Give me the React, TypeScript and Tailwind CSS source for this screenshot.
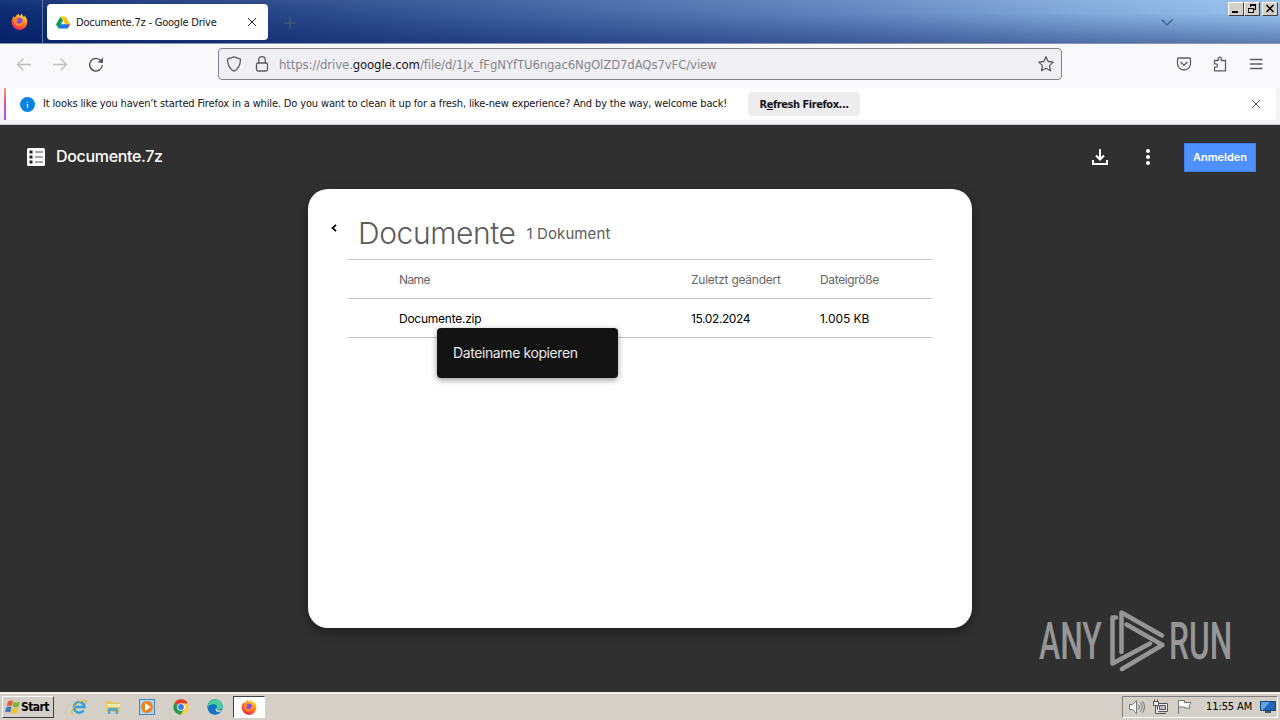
import { ReactNode } from 'react';
import { Info } from 'lucide-react';

const tahoma = "font-['DejaVu_Sans_Condensed','DejaVu_Sans',sans-serif]";
const roboto = "font-['Inter','Open_Sans',sans-serif]";

const FirefoxLogo = ({ size = 17 }: { size?: number }) => (
  <svg width={size} height={size} viewBox="0 0 18 18">
    <defs>
      <linearGradient id="fox" x1="0.8" y1="0" x2="0.3" y2="1">
        <stop offset="0" stopColor="#fff04a" />
        <stop offset="0.4" stopColor="#ff9420" />
        <stop offset="0.75" stopColor="#ff4b3c" />
        <stop offset="1" stopColor="#e91c69" />
      </linearGradient>
    </defs>
    <path fill="url(#fox)" d="M11.4 0.4c.3 1.9 1.6 2.7 2.7 4 .1-.8-.1-1.3-.3-1.8 2.5 1.6 3.6 4.3 3.5 7A8.3 8.3 0 0 1 .7 9.7C.6 7 1.5 5 3 3.3l.6 1.5 1-.5C5.4 2 7 1.2 8.6.7 8 1.6 8.5 2.5 9.2 2.9c.8-.5 1.6-1.1 2.2-2.5z" />
    <circle cx="9" cy="8.4" r="3.3" fill="#8b46e8" />
    <path fill="#ff8a25" d="M3.3 6c2-.6 3.7.1 4.9 1.4-1.9 0-2 1-2.4 1.6.4 2 1.8 2.6 3.5 2.2 1.7-.3 2.3-1.7 2.1-3.2 1.5 1.5 1.5 4-.5 5.5-2.5 1.5-5.8.5-6.9-2.2C3.2 9.5 2.9 7.3 3.3 6z" />
  </svg>
);

const DriveLogo = () => (
  <svg width="14" height="13" viewBox="0 0 14 13">
    <path fill="#0b9d58" d="M4.7.4 7 4.5 2.3 12.3 0 8.3z" />
    <path fill="#ffc107" d="M4.7.4h4.6L14 8.3H9.4z" />
    <path fill="#1a73e8" d="M4.6 8.3H14l-2.3 4.2H2.3z" />
    <path fill="#ea4335" d="M11.6 8.3H14l-1.4 2.6z" />
  </svg>
);

interface StrokeIconProps {
  size?: number;
  className?: string;
  children: ReactNode;
}

function StrokeIcon({ size = 16, className = 'text-[#5b5b66]', children }: StrokeIconProps) {
  return (
    <svg
      width={size}
      height={size}
      viewBox="0 0 16 16"
      fill="none"
      stroke="currentColor"
      strokeWidth="1.3"
      strokeLinecap="round"
      strokeLinejoin="round"
      className={className}
    >
      {children}
    </svg>
  );
}

function WindowButton({ children, className = '' }: { children: ReactNode; className?: string }) {
  return (
    <div
      className={`h-[14px] w-4 border border-t-white border-l-white border-r-[#404040] border-b-[#404040] bg-[#d4d0c8] ${className}`}
    >
      <svg width="14" height="12" viewBox="0 0 14 12" fill="none" stroke="#000" shapeRendering="crispEdges">
        {children}
      </svg>
    </div>
  );
}

function TabBar() {
  return (
    <div className="flex h-[43px] shrink-0 bg-[linear-gradient(to_bottom,rgba(255,255,255,0.06),rgba(0,0,0,0)_30%,rgba(0,20,90,0.4)),linear-gradient(to_right,#0a2a72,#274688_22%,#4467a4_45%,#6588c2_68%,#83abdb_85%,#98c2ee)]">
      <div className="flex h-full w-[43px] items-center justify-center border-r border-[#5f73a6] pr-1">
        <FirefoxLogo />
      </div>
      <div className="mt-1 ml-1 flex h-9 w-[221px] items-center rounded bg-white pr-2.5 pl-[9px]">
        <DriveLogo />
        <span className={`${tahoma} ml-1.5 flex-1 pt-0.5 text-[11px] tracking-[-0.21px] whitespace-nowrap text-[#15141a]`}>
          Documente.7z - Google Drive
        </span>
        <StrokeIcon size={12} className="text-[#15141a]">
          <path d="m3 3 10 10M13 3 3 13" />
        </StrokeIcon>
      </div>
      <div className="flex w-[43px] items-center justify-center pt-0.5">
        <StrokeIcon size={14} className="text-[#4e5f72]">
          <path d="M8 1.5v13M1.5 8h13" />
        </StrokeIcon>
      </div>
      <div className="ml-auto flex items-center pr-[53px]">
        <StrokeIcon size={16} className="text-[#47658e]">
          <path d="m3 6 5 5 5-5" strokeWidth="1.5" />
        </StrokeIcon>
      </div>
      <div className="mt-0.5 mr-[2px] flex">
        <WindowButton>
          <path d="M3 9h6" strokeWidth="2" />
        </WindowButton>
        <WindowButton>
          <path d="M5.5 4V1.5h5v5H9M5 2h6M3.5 5.5h5v4h-5zM3 5h6" />
        </WindowButton>
        <WindowButton className="ml-[2px]">
          <path d="m3.5 2 7 7m0-7-7 7" strokeWidth="1.5" shapeRendering="auto" />
        </WindowButton>
      </div>
    </div>
  );
}

function Toolbar() {
  return (
    <div className="flex h-[45px] shrink-0 items-center border-t border-[#8a93a8] bg-[#f9f9fb] pb-1 pr-4 pl-4">
      <StrokeIcon className="text-[#bdbdc2]">
        <path d="M1.5 8.5h13M7 3 1.5 8.5 7 14" />
      </StrokeIcon>
      <StrokeIcon className="ml-5 text-[#bdbdc2]">
        <path d="M14.5 8.5h-13M9 3l5.5 5.5L9 14" />
      </StrokeIcon>
      <StrokeIcon className="ml-5 text-[#4b4b55]">
        <path d="M14.2 9.5A6.3 6.3 0 1 1 12.8 4.7l1.5 1.5" />
        <path d="M14.5 2.5v3.7h-3.7z" fill="currentColor" strokeWidth="0.8" />
      </StrokeIcon>
      <div className="ml-[114px] flex h-8 w-[844px] items-center rounded border border-[#82828b] bg-[#f0f0f4] pr-[7px] pl-[7px]">
        <StrokeIcon>
          <path d="M8 .8 14.5 3.2c0 5-1.8 9.3-6.5 12C3.3 12.5 1.5 8.2 1.5 3.2z" />
        </StrokeIcon>
        <StrokeIcon className="ml-3 text-[#5b5b66]">
          <rect x="2.5" y="7" width="11" height="8" rx="1.5" />
          <path d="M4.7 7V4a3.3 3.3 0 0 1 6.6 0v3" />
        </StrokeIcon>
        <span className={`${tahoma} ml-[9px] flex-1 pt-0.5 text-[13px] tracking-[-0.11px] whitespace-nowrap text-[#85858d]`}>
          https://drive.<span className="text-[#15141a]">google.com</span>
          /file/d/1Jx_fFgNYfTU6ngac6NgOlZD7dAQs7vFC/view
        </span>
        <StrokeIcon>
          <path d="m8 .8 2.2 4.7 5 .6-3.7 3.5 1 5.2L8 12.3l-4.500 2.500 1-5.200L.8 6.100l5-.6z" />
        </StrokeIcon>
      </div>
      <div className="ml-auto flex gap-5">
        <StrokeIcon>
          <path d="M2.5 2h11c.6 0 1 .4 1 1v4.5a6.5 6.5 0 0 1-13 0V3c0-.6.4-1 1-1zM4.8 6.3 8 9.3l3.2-3" />
        </StrokeIcon>
        <StrokeIcon>
          <path d="M2.5 4.5h3.7V2.7a1.5 1.5 0 0 1 3 0v1.8h4.3v10.3H2.5v-3.6h1.3a1.6 1.6 0 0 0 0-3.3H2.5z" />
        </StrokeIcon>
        <StrokeIcon>
          <path d="M2.5 3.5h11.5M2.5 8h11.5M2.5 12.5h11.5" />
        </StrokeIcon>
      </div>
    </div>
  );
}

function Notification() {
  return (
    <div className="h-[37px] shrink-0 border-b border-[#c8c8cc] bg-[#f4f4f6] pr-1 pb-1 pl-1">
      <div className="flex h-8 items-center rounded bg-white pr-[14px]">
        <div className="h-full w-[2px] bg-linear-to-b from-[#ff9a62] via-[#e5499a] to-[#9059ff]" />
        <div className="ml-[14px] flex size-[15px] items-center justify-center rounded-full bg-[#0a84e0]">
          <Info className="size-[15px] text-white [&>circle]:hidden" strokeWidth={2} />
        </div>
        <span className={`${tahoma} ml-2 w-[705px] text-[11px] tracking-[-0.148px] whitespace-nowrap text-[#15141a]`}>
          It looks like you haven’t started Firefox in a while. Do you want to clean it up for a fresh, like-new
          experience? And by the way, welcome back!
        </span>
        <button
          className={`${tahoma} h-6 w-28 rounded bg-[#ededf0] pt-0.5 text-[11px] font-bold tracking-[-0.45px] whitespace-nowrap text-[#15141a]`}
        >
          R<u>e</u>fresh Firefox...
        </button>
        <StrokeIcon size={12} className="ml-auto text-[#5b5b66]">
          <path d="m3 3 10 10M13 3 3 13" />
        </StrokeIcon>
      </div>
    </div>
  );
}

function ViewerHeader() {
  return (
    <div className="flex h-16 items-center pr-6 pl-[27px] text-white">
      <svg width="18" height="18" viewBox="0 0 18 18">
        <rect width="18" height="18" rx="1.5" fill="#fff" />
        <path d="M2.5 2.5h3v3h-3zM2.5 7.500h3v3h-3zM2.500 12.500h3v3h-3z" fill="#222" />
        <path d="M8 4h8M8 9h8M8 14h8" stroke="#888" strokeWidth="1.5" />
      </svg>
      <span className={`${roboto} ml-[11px] pb-0.5 text-[16px] font-medium tracking-[-0.33px] whitespace-nowrap`}>
        Documente.7z
      </span>
      <svg className="ml-auto" width="16" height="16" viewBox="0 0 16 16" fill="none" stroke="#fff" strokeWidth="2">
        <path d="M8 0v10M4 6.5l4 4 4-4M1 11v4h14v-4" />
      </svg>
      <svg className="ml-[38px]" width="4" height="16" viewBox="0 0 4 16" fill="#fff">
        <circle cx="2" cy="2" r="2" />
        <circle cx="2" cy="8" r="2" />
        <circle cx="2" cy="14" r="2" />
      </svg>
      <button
        className={`${roboto} ml-[34px] h-[29px] w-[72px] border border-[#3f7fee] bg-[#4d90fe] text-[11px] font-semibold whitespace-nowrap`}
      >
        Anmelden
      </button>
    </div>
  );
}

function ArchiveCard() {
  const row =
    'grid h-[39px] grid-cols-[292px_129px_1fr] items-center border-b border-[#c6c6c6] pt-0.5 pl-[51px] text-[12px] tracking-[-0.25px] whitespace-nowrap';
  return (
    <div className={`${roboto} relative mx-auto h-[439px] w-[664px] rounded-[20px] bg-white pr-10 pl-10 shadow-[0_4px_12px_rgba(0,0,0,0.4)]`}>
      <svg className="absolute top-[34px] left-[22px]" width="8" height="10" viewBox="0 0 8 10">
        <path d="M6 1.8 2.5 5 6 8.2" fill="none" stroke="#000" strokeWidth="1.8" />
      </svg>
      <div className="flex h-[71px] items-center border-b border-[#c6c6c6] pt-[18px] pl-2.5 whitespace-nowrap text-[#5c5c5c]">
        <h1 className="text-[30px] font-light tracking-[-0.4px]">Documente</h1>
        <span className="ml-[11px] pt-0.5 text-[15px] tracking-[0.1px]">1 Dokument</span>
      </div>
      <div className={`${row} text-[#666]`}>
        <span className="tracking-[-0.6px]">Name</span>
        <span>Zuletzt geändert</span>
        <span className="tracking-[-0.35px]">Dateigröße</span>
      </div>
      <div className={`${row} text-black`}>
        <span>Documente.zip</span>
        <span className="tracking-[-0.4px]">15.02.2024</span>
        <span className="tracking-[-0.05px]">1.005 KB</span>
      </div>
      <div className="absolute top-[139px] left-[129px] flex h-[50px] w-[181px] items-center rounded bg-[#131313] pb-0.5 pl-4 text-[14px] tracking-[-0.4px] whitespace-nowrap text-[#e8e8e8] shadow-[0_2px_6px_rgba(0,0,0,0.4)]">
        Dateiname kopieren
      </div>
    </div>
  );
}

const Watermark = () => (
  <svg
    className="absolute right-[34px] bottom-[9px] overflow-visible"
    width="210"
    height="86"
    viewBox="1036 597 210 86"
    fill="#969696"
    fontFamily="Roboto, sans-serif"
    fontSize="51"
    fontWeight="500"
  >
    <text transform="translate(1039 659) scale(0.625 1)">ANY</text>
    <text transform="translate(1169 659) scale(0.622 1)">RUN</text>
    <g fill="none" stroke="#969696" strokeWidth="4.5" strokeLinecap="round" strokeLinejoin="round">
      <path d="M1121.5 652V612.5L1162 635.5" />
      <path d="M1126.5 624.5 1162.5 645 1122 669" />
      <path d="M1116 617.5h-3.5v46L1150 643.5" />
    </g>
  </svg>
);

function Taskbar() {
  return (
    <div className={`${tahoma} flex h-7 shrink-0 items-center border-t-2 border-[#f3f1ed] bg-[#d4d0c8] pr-0.5 pl-0.5 text-[11px] text-black`}>
      <div className="flex h-[22px] w-[52px] items-center border border-t-white border-l-white border-r-[#404040] border-b-[#404040] pl-0.5 text-[12px] font-bold tracking-[-0.6px]">
        <svg width="16" height="16" viewBox="0 0 16 16">
          <path fill="#e35b2f" d="M3 2.5c2-1.5 3.5-1.2 5-.3L6.7 7.3C5 6.3 3.5 6.5 1.7 7.3z" />
          <path fill="#7eb53e" d="M8.8 2.7c2 1.2 3.5 1 6.2-.3l-1.3 5c-2 1.2-4 1.3-6.2.3z" />
          <path fill="#3c78c8" d="M1.4 8.2c2-1 3.5-.8 5.1.1L5.2 13.4C3.5 12.3 2 12.5 0 13.3z" />
          <path fill="#f5c12c" d="M7.3 8.7c2 1.1 4 1 6.2-.2L12.2 13.5c-2 1.3-4 1.5-6.2.3z" />
        </svg>
        Start
      </div>
      <div className="ml-[17px] flex items-center gap-[18px]">
        <svg width="16" height="16" viewBox="0 0 16 16" fill="none">
          <path d="M12.5 11.5A5.3 5.3 0 1 1 13.5 8H4" stroke="#2e9fe0" strokeWidth="2.5" />
          <path d="M1.5 15C-1 12 5 4 11 2c3-1 5-.5 3.5 2" stroke="#e6b52f" strokeWidth="1.3" />
        </svg>
        <svg width="16" height="16" viewBox="0 0 16 16">
          <path fill="#e4c75c" d="M1 2h5l1 1.5h8V13H1z" />
          <path fill="#f7e9a6" d="M2 5h13v3H2z" />
          <path fill="#5ba5d2" d="M3 9h10v6h-2.5v-3h-5v3H3z" />
        </svg>
        <svg width="16" height="16" viewBox="0 0 16 16">
          <rect x="0.5" y="0.5" width="15" height="15" fill="#acd3ef" stroke="#4789bd" />
          <circle cx="8" cy="8" r="6" fill="#ef821d" />
          <path d="m6 4 6 4-6 4z" fill="#fff" />
        </svg>
        <svg width="16" height="16" viewBox="0 0 16 16">
          <circle cx="8" cy="8" r="7.7" fill="#ffcd40" />
          <path fill="#e33b2e" d="M8 8 1.3 4.2A7.7 7.7 0 0 1 14.8 4.5H8z" />
          <path fill="#259b4c" d="M8 8 1.3 4.2A7.7 7.7 0 0 0 7.8 15.7L11 10z" />
          <circle cx="8" cy="8" r="3.8" fill="#fff" />
          <circle cx="8" cy="8" r="2.9" fill="#3b78e7" />
        </svg>
        <svg width="16" height="16" viewBox="0 0 16 16">
          <circle cx="8" cy="8" r="7.7" fill="#1472c8" />
          <path fill="#48cf9c" d="M1 5.5C4-1.5 15-1 15.7 7c0 4-4.5 4.5-6 3.2C11 8 9.5 5.5 7 5.3 4 5 2 6.5.5 8.5z" />
          <path fill="#d4d0c8" d="M9.5 9c0 2.5 3 3 5.7 1.8-1 1.7-2 2.3-3.2 2.4-3 .1-4.5-2.7-2.5-4.2z" />
        </svg>
      </div>
      <div className="ml-[10px] flex h-[22px] w-8 items-center justify-center border border-t-[#404040] border-l-[#404040] border-r-white border-b-white bg-white">
        <FirefoxLogo size={16} />
      </div>
      <div className="ml-auto flex h-[22px] w-[156px] items-center border border-t-[#808080] border-l-[#808080] border-r-white border-b-white pl-[5px]">
        <svg width="17" height="16" viewBox="0 0 17 16" fill="#fff" stroke="#777">
          <path d="M1.5 5.5h3l4-4v13l-4-4h-3z" />
          <path d="M10.5 5.5q2 2.5 0 5M12.5 3.5q3.5 4.5 0 9M14.5 2q4 6 0 12" fill="none" />
        </svg>
        <svg className="ml-[7px]" width="17" height="16" viewBox="0 0 17 16" fill="#eee" stroke="#555">
          <path d="M5.5 4.5h10v8h-10z" />
          <path d="M7.5 6.5h6v4h-6z" fill="#bbb" />
          <path d="M7 14.5h7M3.5 6v8.5H7M1.5 2.5h5v4h-5zM2.5.5v2M5.5.5v2" />
        </svg>
        <svg className="ml-[7px]" width="16" height="16" viewBox="0 0 16 16" fill="#fff" stroke="#777">
          <path d="M2.5 1v14M2.5 1.5h6v2h6.5l-2 3.5 1 2H8.5v-1h-6z" />
        </svg>
        <span className="ml-[14px] pt-px tracking-[-0.1px] whitespace-nowrap">11:55 AM</span>
        <svg className="ml-auto mr-px" width="16" height="14" viewBox="0 0 16 14">
          <path fill="#2167b5" stroke="#17477e" d="M.5 1.5h15v9H.5z" />
          <path fill="#5ba4e5" d="M1 2h9L3 10H1z" />
          <path fill="#456" d="M5 11h6v2H5z" />
        </svg>
      </div>
    </div>
  );
}

export default function App() {
  return (
    <div className="flex h-[720px] w-[1280px] flex-col overflow-hidden">
      <TabBar />
      <Toolbar />
      <Notification />
      <main className="relative flex-1 bg-[#303030]">
        <ViewerHeader />
        <ArchiveCard />
        <Watermark />
      </main>
      <Taskbar />
    </div>
  );
}
